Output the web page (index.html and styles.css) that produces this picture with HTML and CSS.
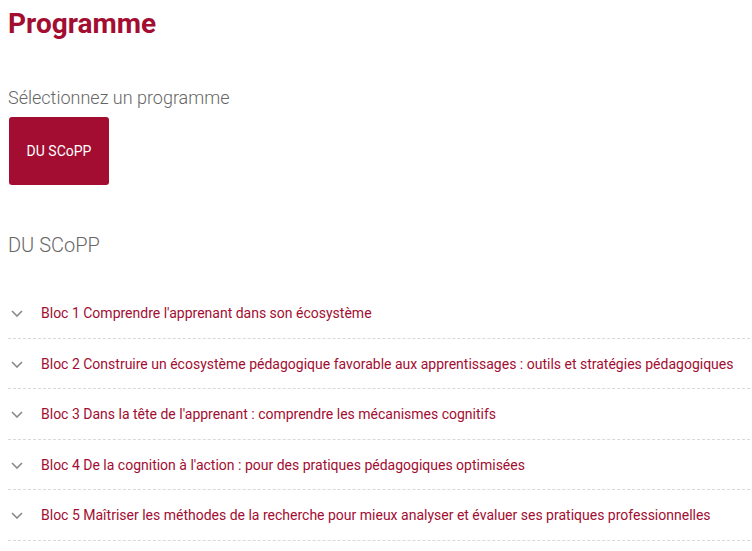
FILE: index.html
```html
<!DOCTYPE html>
<html lang="fr">
<head>
<meta charset="utf-8">
<title>Programme</title>
<link rel="stylesheet" href="styles.css">
</head>
<body>
<main class="page">
  <h1 class="title">Programme</h1>
  <p class="subtitle">Sélectionnez un programme</p>
  <div class="programs">
    <button class="program-btn" type="button">DU SCoPP</button>
  </div>
  <h2 class="program-name">DU SCoPP</h2>
  <ul class="blocs">
    <li class="bloc"><svg class="chev" width="12" height="7" viewBox="0 0 12 7"><polyline points="1,1 6,6 11,1"/></svg><span>Bloc 1 Comprendre l'apprenant dans son écosystème</span></li>
    <li class="bloc"><svg class="chev" width="12" height="7" viewBox="0 0 12 7"><polyline points="1,1 6,6 11,1"/></svg><span>Bloc 2 Construire un écosystème pédagogique favorable aux apprentissages : outils et stratégies pédagogiques</span></li>
    <li class="bloc"><svg class="chev" width="12" height="7" viewBox="0 0 12 7"><polyline points="1,1 6,6 11,1"/></svg><span>Bloc 3 Dans la tête de l'apprenant : comprendre les mécanismes cognitifs</span></li>
    <li class="bloc"><svg class="chev" width="12" height="7" viewBox="0 0 12 7"><polyline points="1,1 6,6 11,1"/></svg><span>Bloc 4 De la cognition à l'action : pour des pratiques pédagogiques optimisées</span></li>
    <li class="bloc"><svg class="chev" width="12" height="7" viewBox="0 0 12 7"><polyline points="1,1 6,6 11,1"/></svg><span>Bloc 5 Maîtriser les méthodes de la recherche pour mieux analyser et évaluer ses pratiques professionnelles</span></li>
  </ul>
</main>
</body>
</html>
```

FILE: styles.css
```css
html, body {
  margin: 0;
  padding: 0;
  background: #fff;
}
body {
  font-family: Roboto, "Liberation Sans", Arial, sans-serif;
}
.page {
  padding: 7px 2px 0 8px;
  display: flex;
  flex-direction: column;
}
.title {
  margin: 0;
  font-size: 28px;
  font-weight: 700;
  line-height: normal;
  color: #a20d31;
}
.subtitle {
  margin: 47px 0 0;
  font-size: 18px;
  font-weight: 300;
  line-height: normal;
  color: #666;
}
.programs {
  margin-top: 9px;
  display: flex;
  gap: 10px;
}
.program-btn {
  width: 100px;
  height: 68px;
  margin-left: 1px;
  border: none;
  border-radius: 3px;
  background: #a20d31;
  color: #fff;
  font-family: inherit;
  font-size: 14px;
  font-weight: 400;
  padding: 0;
}
.program-name {
  margin: 48px 0 0;
  font-size: 20px;
  font-weight: 300;
  line-height: normal;
  color: #666;
}
.blocs {
  list-style: none;
  margin: 31px 0 0;
  padding: 0;
}
.bloc {
  display: flex;
  align-items: center;
  gap: 18px;
  padding: 17px 0 15px 3px;
  line-height: 17.5px;
  font-size: 14px;
  color: #a20d31;
  border-bottom: 1px dashed #d9d9d9;
}
.chev {
  flex: none;
  fill: none;
  stroke: #888;
  stroke-width: 1.6;
}
```
